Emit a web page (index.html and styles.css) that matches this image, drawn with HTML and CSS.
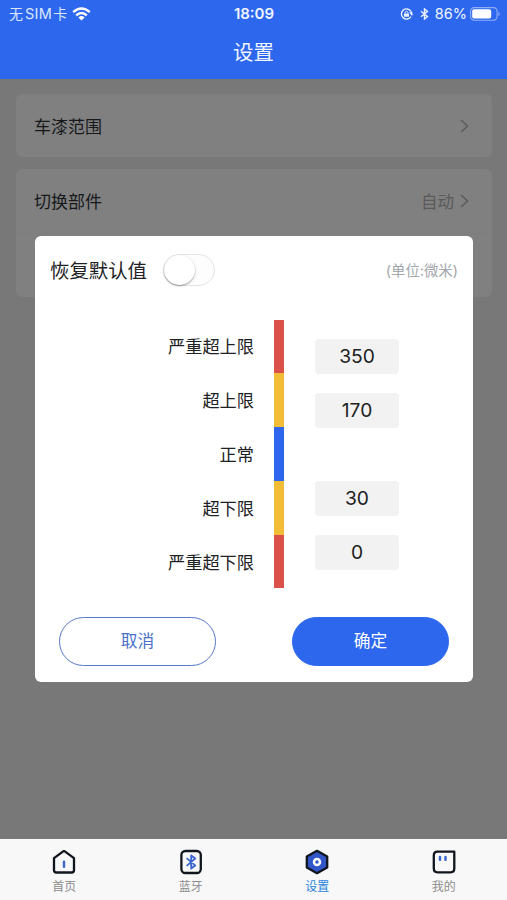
FILE: index.html
```html
<!DOCTYPE html>
<html lang="zh-CN">
<head>
<meta charset="utf-8">
<title>设置</title>
<link rel="stylesheet" href="styles.css">
</head>
<body>
<div class="app">
  <header class="header">
    <div class="status">
      <div class="status-left">
        <span class="carrier">无<span class="sim">SIM</span>卡</span>
        <svg class="wifi" width="19" height="14" viewBox="0 0 19 14" fill="none" stroke="#fff" stroke-width="2.4">
          <path d="M1.2 5.2Q9.5-2.2 17.8 5.2"/>
          <path d="M4.2 8.3Q9.5 3.5 14.8 8.3"/>
          <path d="M9.5 13.6 6.4 10.4Q9.5 7.8 12.6 10.4Z" fill="#fff" stroke="none"/>
        </svg>
      </div>
      <span class="time">18:09</span>
      <div class="status-right">
        <svg width="14" height="12" viewBox="0 0 14 12" fill="none" stroke="#e8effd" stroke-width="1.4">
          <path d="M10.9 3.4A5.1 5.1 0 1 0 10.9 8.6"/>
          <path d="M9.4 4.2 11.6 3.2Q13.6 5.6 12.6 7.4L11.2 7.2Z" fill="#e8effd" stroke="none"/>
          <rect x="4" y="5.4" width="5" height="3.4" rx=".5" fill="#e8effd" stroke="none"/>
          <path d="M5.1 5.8V4.7a1.4 1.4 0 0 1 2.8 0v1.1" stroke-width="1"/>
        </svg>
        <svg class="status-bt" width="9" height="12" viewBox="0 0 9 12" fill="none" stroke="#e8effd" stroke-width="1.4">
          <path d="M1 3.2 7.5 8.6 4.5 11.1V.9L7.5 3.4 1 8.8"/>
        </svg>
        <span class="percent">86%</span>
        <svg class="battery" width="31" height="14" viewBox="0 0 31 14">
          <rect x=".6" y=".6" width="26.5" height="12.6" rx="3.6" fill="none" stroke="#91aff5" stroke-width="1.1"/>
          <rect x="2.2" y="2.3" width="19" height="9.2" rx="1.8" fill="#fff"/>
          <path d="M28.5 4.6Q31 6.9 28.5 9.2Z" fill="#91aff5"/>
        </svg>
      </div>
    </div>
    <h1 class="title">设置</h1>
  </header>

  <main class="content">
    <section class="card">
      <div class="row"><span>车漆范围</span>
        <svg class="chevron" width="9" height="14" viewBox="0 0 9 14"><path d="M1 1 7.5 7 1 13"/></svg>
      </div>
    </section>
    <section class="card card-double">
      <div class="row"><span>切换部件</span>
        <span class="row-value">自动<svg class="chevron" width="9" height="14" viewBox="0 0 9 14"><path d="M1 1 7.5 7 1 13"/></svg></span>
      </div>
      <div class="row row-next"></div>
    </section>

    <div class="modal">
      <div class="modal-head">
        <span class="modal-title">恢复默认值</span>
        <span class="switch"><span class="knob"></span></span>
        <span class="unit">(单位:微米)</span>
      </div>
      <div class="range">
        <div class="labels">
          <span>严重超上限</span><span>超上限</span><span>正常</span><span>超下限</span><span>严重超下限</span>
        </div>
        <div class="scale">
          <span class="red"></span><span class="yellow"></span><span class="blue"></span><span class="yellow"></span><span class="red"></span>
        </div>
        <div class="values">
          <div class="pair"><span class="value">350</span><span class="value">170</span></div>
          <div class="pair"><span class="value">30</span><span class="value">0</span></div>
        </div>
      </div>
      <div class="actions">
        <button class="btn cancel">取消</button>
        <button class="btn confirm">确定</button>
      </div>
    </div>
  </main>

  <nav class="tabs">
    <div class="tab">
      <svg width="26" height="26" viewBox="0 0 26 26" fill="none" stroke="#11151d" stroke-width="2.3" stroke-linejoin="round">
        <path d="M3 9.2 12.2 2.3Q13 1.8 13.8 2.3L23 9.2V21.2Q23 23.5 20.7 23.5H5.3Q3 23.5 3 21.2Z"/>
        <path d="M13 12.7V17.8" stroke="#3c66cf" stroke-width="2.5" stroke-linecap="round"/>
      </svg>
      <span>首页</span>
    </div>
    <div class="tab">
      <svg width="26" height="26" viewBox="0 0 26 26" fill="none" stroke="#11151d" stroke-width="2.3">
        <rect x="3.4" y="2" width="19.4" height="22" rx="4"/>
        <path d="M8.6 9.1 17.2 16.4 13.2 19.6V6.4L17.2 9.6 8.6 16.9" stroke="#3c66cf" stroke-width="1.9" stroke-linejoin="round"/>
      </svg>
      <span>蓝牙</span>
    </div>
    <div class="tab active">
      <svg width="26" height="26" viewBox="0 0 26 26" fill="none">
        <path d="M13 1.8 23.2 7.4V18.6L13 24.2 2.8 18.6V7.4Z" fill="#3156c8" stroke="#11151d" stroke-width="2.3" stroke-linejoin="round"/>
        <circle cx="13" cy="13" r="3" stroke="#fff" stroke-width="2.5"/>
      </svg>
      <span>设置</span>
    </div>
    <div class="tab">
      <svg width="26" height="26" viewBox="0 0 26 26" fill="none">
        <path d="M6.5 2.7H23.3V19.6Q23.3 23.3 19.6 23.3H6.5Q2.8 23.3 2.8 19.6V6.4Q2.8 2.7 6.5 2.7Z" stroke="#11151d" stroke-width="2.3" stroke-linejoin="round"/>
        <path d="M9 8V10.8M14.5 8V10.8" stroke="#3c66cf" stroke-width="2.5" stroke-linecap="round"/>
      </svg>
      <span>我的</span>
    </div>
  </nav>
</div>
</body>
</html>
```

FILE: styles.css
```css
* { box-sizing: border-box; }

body {
  margin: 0;
  font-family: Inter, "Noto Sans CJK SC", sans-serif;
  color: #202124;
}

.app {
  display: flex;
  flex-direction: column;
  height: 900px;
}

.header {
  height: 79px;
  background: #2d67ee;
  color: #f0f5fe;
}

.status {
  display: grid;
  grid-template-columns: 1fr auto 1fr;
  align-items: center;
  height: 27px;
  padding: 0 6px 0 9px;
  font-size: 14px;
  line-height: 20px;
}

.status-left,
.status-right {
  display: flex;
  align-items: center;
}

.status-right { justify-content: flex-end; }

.carrier { color: #dce7fd; }
.sim { margin: 0 1px 0 2px; font-size: 14.5px; letter-spacing: .3px; }
.wifi { margin-left: 5px; }
.time { font-weight: 600; font-size: 15px; margin-right: 2px; }
.status-bt { margin: 0 6px; }
.percent { font-size: 14.5px; }
.battery { margin-left: 3px; }

.title {
  margin: 11px 0 0;
  text-align: center;
  font-size: 20.4px;
  line-height: 30px;
  font-weight: 400;
}

.content {
  position: relative;
  flex: 1;
  padding: 15px 15px 0 16px;
  background: #787878;
}

.card {
  height: 63px;
  margin-bottom: 12px;
  border-radius: 6px;
  background: #808080;
}

.card-double { height: 128px; }

.row {
  display: flex;
  align-items: center;
  justify-content: space-between;
  height: 64px;
  padding: 0 23px 0 18px;
  font-size: 17px;
  color: #16181b;
}

.row > span { padding-bottom: 2px; }
.row .row-value { padding-bottom: 0; }

.row-next { border-top: 1px solid #7d7d7d; }

.row-value {
  display: flex;
  align-items: center;
  gap: 6px;
  font-size: 16.5px;
  color: #5a5a5a;
}

.chevron { fill: none; stroke: #5b5b5b; stroke-width: 1.5; }

.modal {
  position: absolute;
  top: 157px;
  left: 35px;
  width: 438px;
  height: 446px;
  border-radius: 6px;
  background: #fff;
}

.modal-head {
  display: flex;
  align-items: center;
  height: 68px;
  padding: 0 15px;
}

.modal-title { font-size: 19.4px; padding-bottom: 2px; }

.switch {
  width: 52px;
  height: 32px;
  margin-left: 16px;
  border: 1px solid #e4e4e4;
  border-radius: 16px;
  background: #fdfdfd;
}

.knob {
  display: block;
  width: 31px;
  height: 30px;
  border-radius: 50%;
  background: #fff;
  box-shadow: 0 1px 2px rgba(0, 0, 0, .4);
}

.unit {
  margin-left: auto;
  padding-bottom: 2px;
  font-size: 14.4px;
  color: #a3a6aa;
}

.range {
  display: grid;
  grid-template-columns: 219px 10px 84px;
  column-gap: 19.5px;
  height: 269px;
  margin-top: 15.5px;
}

.labels,
.scale {
  display: grid;
  grid-template-rows: repeat(5, 1fr);
}

.labels {
  align-items: center;
  text-align: right;
  font-size: 17.2px;
}

.labels span { padding-bottom: 1px; }

.red { background: #d95148; }
.yellow { background: #f1bd37; }
.blue { background: #2d67ee; }

.values {
  display: flex;
  flex-direction: column;
  justify-content: space-between;
  margin-left: 12px;
  width: 84px;
  padding: 19px 0;
}

.pair { display: grid; gap: 19px; }

.value {
  height: 35px;
  border-radius: 4px;
  background: #f2f2f2;
  text-align: center;
  font-size: 19.2px;
  line-height: 34px;
}

.actions {
  display: flex;
  justify-content: space-between;
  margin-top: 28.5px;
  padding: 0 24px;
}

.btn {
  width: 157px;
  height: 49px;
  padding: 0 0 3px;
  border: 1.5px solid #2d67ee;
  border-radius: 25px;
  font: inherit;
  font-size: 16.7px;
}

.cancel { border-color: #5679c7; background: #fff; color: #4a70c8; }
.confirm { background: #2d67ee; color: #fff; }

.tabs {
  display: grid;
  grid-template-columns: repeat(4, 1fr);
  height: 61px;
  padding-left: 1px;
  background: #f8f8f8;
}

.tab {
  display: flex;
  flex-direction: column;
  align-items: center;
  padding-top: 10px;
  font-size: 12px;
  line-height: 18px;
  color: #8c8c8c;
}

.tab span { margin-top: 3px; }
.active { color: #2885dc; }
```
